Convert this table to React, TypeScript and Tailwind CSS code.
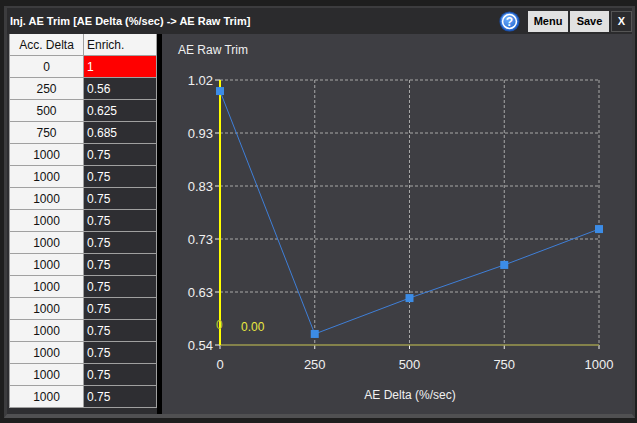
import React from 'react';

const ROWS: Array<{ delta: number; enrich: string }> = [
  { delta: 0, enrich: '1' },
  { delta: 250, enrich: '0.56' },
  { delta: 500, enrich: '0.625' },
  { delta: 750, enrich: '0.685' },
  ...Array.from({ length: 12 }, () => ({ delta: 1000, enrich: '0.75' })),
];

const POINTS: Array<[number, number]> = [
  [0, 1],
  [250, 0.56],
  [500, 0.625],
  [750, 0.685],
  [1000, 0.75],
];

// plot box, in svg coords
const PL = 58;
const PR = 437;
const PT = 46;
const PB = 311;
const sx = (v: number) => PL + (v / 1000) * (PR - PL);
const sy = (v: number) => PB - ((v - 0.54) / 0.48) * (PB - PT);

const Y_TICKS = ['1.02', '0.93', '0.83', '0.73', '0.63', '0.54'];
const X_TICKS = [0, 250, 500, 750, 1000];

const HelpIcon: React.FC = () => (
  <svg width="21" height="21" viewBox="0 0 20 20">
    <defs>
      <radialGradient id="hg" cx="40%" cy="35%" r="70%">
        <stop offset="0%" stopColor="#6fb0ff" />
        <stop offset="100%" stopColor="#1d5fc9" />
      </radialGradient>
    </defs>
    <circle cx="10" cy="10" r="9.6" fill="#1b4fa8" />
    <circle cx="10" cy="10" r="8.6" fill="url(#hg)" />
    <circle cx="10" cy="10" r="6.6" fill="none" stroke="#fff" strokeWidth="1.5" />
    <text x="10" y="14" textAnchor="middle" fill="#fff" fontSize="11.5" fontWeight="700" fontFamily="Liberation Sans, Arial, sans-serif">?</text>
  </svg>
);

const Chart: React.FC = () => {
  const path = POINTS.map(([x, y], i) => `${i ? 'L' : 'M'}${sx(x)} ${sy(y)}`).join(' ');
  return (
    <svg width="470" height="379" className="block" fontFamily="Liberation Sans, Arial, sans-serif">
      <text x="16" y="20" fill="#f0f0f0" fontSize="12">AE Raw Trim</text>
      {Y_TICKS.map((t, i) => {
        const y = PT + (i * (PB - PT)) / 5;
        return (
          <g key={t}>
            {i < 5 && <line x1={PL} x2={PR} y1={y} y2={y} stroke="#a8a8a8" strokeDasharray="3 2" />}
            <line x1={PL - 5} x2={PL} y1={y} y2={y} stroke="#f0f0f0" />
            <text x={PL - 7} y={y + 5} textAnchor="end" fill="#f0f0f0" fontSize="13">{t}</text>
          </g>
        );
      })}
      {X_TICKS.map((t) => (
        <g key={t}>
          {t > 0 && <line x1={sx(t)} x2={sx(t)} y1={PT} y2={PB} stroke="#a8a8a8" strokeDasharray="3 2" />}
          <line x1={sx(t)} x2={sx(t)} y1={PB} y2={PB + 4} stroke="#f0f0f0" />
          <text x={sx(t)} y={PB + 24} textAnchor="middle" fill="#f0f0f0" fontSize="13">{t}</text>
        </g>
      ))}
      <line x1={PL} x2={PR} y1={PB} y2={PB} stroke="#9c9a4e" strokeWidth="1.5" />
      <line x1={PL} x2={PL} y1={PT} y2={PB} stroke="#ffff00" strokeWidth="2" />
      <text x={PL - 4} y={295} fill="#b8d030" fontSize="12">0</text>
      <text x={79} y={297} fill="#e8e840" fontSize="12">0.00</text>
      <path d={path} fill="none" stroke="#3f7fd8" strokeWidth="1" />
      {POINTS.map(([x, y]) => (
        <rect key={x} x={sx(x) - 4} y={sy(y) - 4} width="8" height="8" fill="#3c8ce6" />
      ))}
      <text x="248" y="365" textAnchor="middle" fill="#f0f0f0" fontSize="12">AE Delta (%/sec)</text>
    </svg>
  );
};

export default function App() {
  return (
    <div className="w-[637px] h-[423px] bg-[#1e1e1e] pt-[6px] pl-[4px] font-['Liberation_Sans',Arial,sans-serif]">
      <div className="w-[631px] h-[412px] border-t-2 border-l-[3px] border-r-[3px] border-[#3c3c3e] border-b-[4px] border-b-[#505052] bg-[#2b2b2d] flex flex-col">
        <div className="h-[26px] flex items-center pl-[3px] pr-0">
          <span className="text-white font-bold text-[11px] flex-1">Inj. AE Trim [AE Delta (%/sec) -&gt; AE Raw Trim]</span>
          <div className="flex items-center gap-[2px] h-[21px]">
            <span className="mr-[6px] flex"><HelpIcon /></span>
            <button className="h-[21px] w-[40px] bg-[#e1e1e1] text-black font-bold text-[11px]">Menu</button>
            <button className="h-[21px] w-[39px] bg-[#e1e1e1] text-black font-bold text-[11px]">Save</button>
            <button className="h-[21px] w-[21px] bg-[#2b2b2d] border border-[#555] text-white font-bold text-[11px]">X</button>
          </div>
        </div>
        <div className="flex-1 flex min-h-0">
          <div className="w-[150px] pl-[2px] bg-[#2e2e31]">
            <div className="border-l border-[#a0a0a0] w-[148px]">
              {[{ delta: 'Acc. Delta', enrich: 'Enrich.' }, ...ROWS].map((r, i) => (
                <div key={i} className="flex h-[22px] border-b border-[#a0a0a0] text-[12px] leading-[22px]">
                  <div className="w-[74px] bg-[#f4f4f4] text-[#111] text-center border-r border-[#a0a0a0]">{r.delta}</div>
                  <div
                    className={
                      i === 0
                        ? 'w-[73px] bg-[#f4f4f4] text-[#111] pl-[3px] border-r border-[#a0a0a0]'
                        : i === 1
                          ? 'w-[73px] bg-[#ff0000] text-white pl-[3px] border-r border-[#a0a0a0]'
                          : 'w-[73px] bg-[#2e2e32] text-white pl-[3px] border-r border-[#a0a0a0]'
                    }
                  >
                    {r.enrich}
                  </div>
                </div>
              ))}
            </div>
          </div>
          <div className="w-[5px] bg-black" />
          <div className="flex-1 bg-[#3e3e43]">
            <Chart />
          </div>
        </div>
      </div>
    </div>
  );
}
